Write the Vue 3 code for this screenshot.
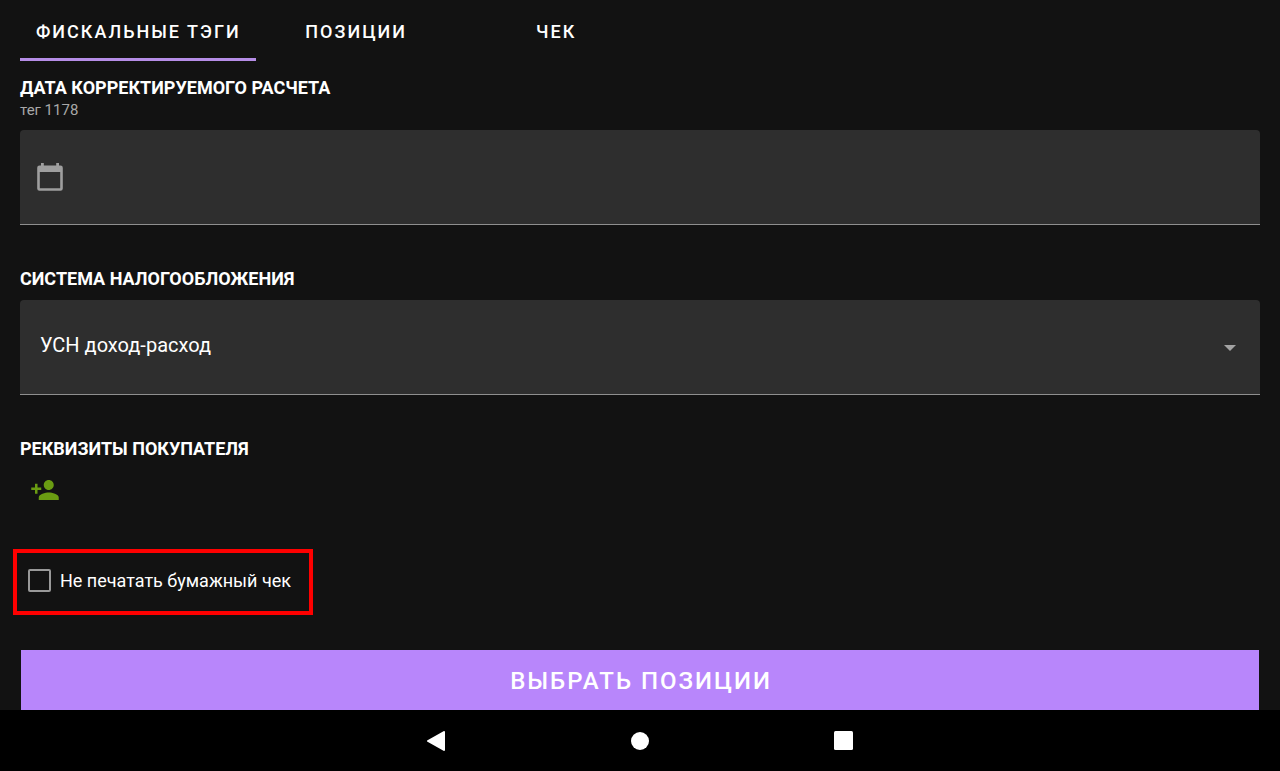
<script setup>
import { ref } from 'vue'

const tabs = ['ФИСКАЛЬНЫЕ ТЭГИ', 'ПОЗИЦИИ', 'ЧЕК']
const activeTab = ref(0)
const date = ref('')
const tax = ref('УСН доход-расход')
const noPaper = ref(false)
</script>

<template>
  <div class="screen">
    <main class="content">
      <nav class="tabs">
        <button
          v-for="(tab, i) in tabs"
          :key="tab"
          type="button"
          class="tab"
          :class="{ active: i === activeTab }"
          @click="activeTab = i"
        >{{ tab }}</button>
      </nav>

      <section class="group date-group">
        <label class="title" for="date">ДАТА КОРРЕКТИРУЕМОГО РАСЧЕТА</label>
        <span class="hint">тег 1178</span>
        <div class="field">
          <svg class="calendar" viewBox="0 0 30 30" width="30" height="30" aria-hidden="true">
            <path fill="#9f9f9f" fill-rule="evenodd" d="M6 1h2.800v2.500h12.400V1H24v2.500h1.500a2.300 2.300 0 0 1 2.300 2.300v20.700a2.300 2.300 0 0 1-2.300 2.300h-21a2.300 2.300 0 0 1-2.300-2.300V5.800a2.300 2.300 0 0 1 2.300-2.300H6zM4.800 10v16.300h20.400V10z" />
          </svg>
          <input id="date" v-model="date" class="control date" type="text" />
        </div>
      </section>

      <section class="group">
        <label class="title" for="tax">СИСТЕМА НАЛОГООБЛОЖЕНИЯ</label>
        <div class="field">
          <select id="tax" v-model="tax" class="control select">
            <option>УСН доход-расход</option>
          </select>
          <svg class="arrow" viewBox="0 0 12 6" width="12" height="6" aria-hidden="true">
            <path fill="#a3a3a3" d="M0 0h12L6 6z" />
          </svg>
        </div>
      </section>

      <section class="group buyer">
        <h2 class="title">РЕКВИЗИТЫ ПОКУПАТЕЛЯ</h2>
        <button type="button" class="add" aria-label="Добавить покупателя">
          <svg viewBox="0 0 24 24" width="30" height="30" aria-hidden="true">
            <path fill="#6a9c12" d="M15 12c2.210 0 4-1.790 4-4s-1.790-4-4-4-4 1.790-4 4 1.790 4 4 4zm-9-2V7H4v3H1v2h3v3h2v-3h3v-2H6zm9 4c-2.670 0-8 1.340-8 4v2h16v-2c0-2.660-5.330-4-8-4z" />
          </svg>
        </button>
      </section>

      <label class="paper">
        <input v-model="noPaper" type="checkbox" class="check" />
        <span>Не печатать бумажный чек</span>
      </label>

      <button type="button" class="primary">ВЫБРАТЬ ПОЗИЦИИ</button>
    </main>

    <footer class="system">
      <button type="button" class="key" aria-label="Назад">
        <svg viewBox="0 0 20 20" width="20" height="20" aria-hidden="true">
          <path fill="#fff" stroke="#fff" stroke-width="2" stroke-linejoin="round" d="M2 10L18 1v18z" />
        </svg>
      </button>
      <button type="button" class="key" aria-label="Домой">
        <svg viewBox="0 0 20 20" width="20" height="20" aria-hidden="true">
          <circle cx="10" cy="10" r="9" fill="#fff" />
        </svg>
      </button>
      <button type="button" class="key" aria-label="Недавние">
        <svg viewBox="0 0 20 20" width="20" height="20" aria-hidden="true">
          <rect width="19" height="19" rx="1.500" fill="#fff" />
        </svg>
      </button>
    </footer>
  </div>
</template>

<style>
body {
  margin: 0;
  background: #121212;
}
</style>

<style scoped>
.screen {
  min-height: 100vh;
  display: flex;
  flex-direction: column;
  background: #121212;
  color: #fff;
  font-family: Roboto, "Liberation Sans", sans-serif;
}
.screen * {
  box-sizing: border-box;
}
button,
input,
select {
  margin: 0;
  padding: 0;
  border: 0;
  border-radius: 0;
  background: none;
  color: inherit;
  font-family: inherit;
}
.content {
  flex: 1;
  display: flex;
  flex-direction: column;
  padding: 0 20px;
}
.tabs {
  display: flex;
}
.tab {
  min-width: 200px;
  height: 61px;
  padding: 5px 15px 0 16px;
  border-bottom: 3px solid transparent;
  font-size: 18px;
  font-weight: 500;
  letter-spacing: 2px;
}
.tab.active {
  border-bottom-color: #b58de6;
}
.group {
  display: flex;
  flex-direction: column;
  margin-bottom: 43px;
}
.date-group {
  margin-top: 16px;
}
.title {
  margin: 0 0 10px;
  font-size: 18px;
  line-height: 22px;
  font-weight: 700;
}
.date-group .title {
  margin: 0;
}
.hint {
  margin-bottom: 9px;
  font-size: 15px;
  line-height: 22px;
  color: #a8a8a8;
}
.field {
  position: relative;
  height: 95px;
  border-bottom: 1px solid #8f8f8f;
  border-radius: 4px 4px 0 0;
  background: #2e2e2e;
}
.control {
  display: block;
  width: 100%;
  height: 100%;
  font-size: 20px;
  outline: none;
}
.date {
  padding: 0 20px 0 60px;
}
.select {
  appearance: none;
  padding: 0 50px 4px 20px;
}
.calendar {
  position: absolute;
  left: 15px;
  top: 32px;
  pointer-events: none;
}
.arrow {
  position: absolute;
  right: 24px;
  top: 45px;
  pointer-events: none;
}
.buyer {
  align-items: flex-start;
  margin-bottom: 44px;
}
.buyer .title {
  margin-bottom: 15px;
}
.add {
  height: 30px;
  margin-left: 10px;
}
.add svg {
  display: block;
}
.paper {
  align-self: flex-start;
  display: flex;
  align-items: center;
  gap: 9px;
  height: 66px;
  margin-left: -7px;
  padding: 0 18px 4px 11px;
  border: 4px solid #f00;
  font-size: 18px;
}
.check {
  appearance: none;
  width: 23px;
  height: 23px;
  border: 2px solid #999;
  border-radius: 2px;
}
.check:checked {
  background: #b886fb;
}
.primary {
  height: 60px;
  margin: auto 1px 0;
  padding: 2px 0 0 2px;
  background: #b886fb;
  font-size: 24px;
  font-weight: 500;
  letter-spacing: 2px;
}
.system {
  display: flex;
  justify-content: center;
  gap: 184px;
  height: 61px;
  padding: 1px 1px 0 0;
  background: #000;
}
.key {
  width: 20px;
}
.key svg {
  display: block;
}
</style>
